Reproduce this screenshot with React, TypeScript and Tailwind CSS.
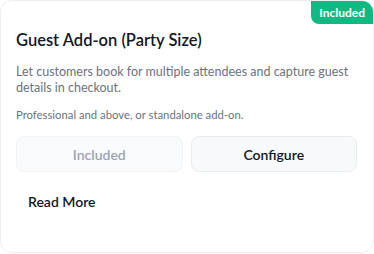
import React from "react";

export default function App() {
  return (
    <div className="w-[374px] h-[254px] bg-white" style={{ fontFamily: 'Lato, sans-serif' }}>
      <div className="relative w-[374px] h-[253px] rounded-xl border border-[#eceef1] bg-white overflow-hidden pl-[15px] pr-4 pt-[27px] flex flex-col">
        <div className="absolute top-0 right-0 bg-[#10b981] text-white text-[12px] font-bold leading-[23px] px-2 rounded-bl-lg">
          Included
        </div>
        <h3 className="text-[16.5px] font-semibold text-[#111827] leading-6">Guest Add-on (Party Size)</h3>
        <p className="mt-[12px] text-[12.5px] leading-[16px] text-[#6b7280]">
          Let customers book for multiple attendees and capture guest details in checkout.
        </p>
        <p className="mt-[11px] text-[11.3px] leading-[16px] text-[#6b7280]">
          Professional and above, or standalone add-on.
        </p>
        <div className="mt-[13px] grid grid-cols-2 gap-2">
          <button className="h-[36px] rounded-lg border border-[#f1f3f5] bg-[#f9fafb] text-[14px] font-semibold text-[#9ca3af]">
            Included
          </button>
          <button className="h-[36px] rounded-lg border border-[#e8ebef] bg-[#f8f9fb] text-[14px] font-semibold text-[#111827]">
            Configure
          </button>
        </div>
        <div className="mt-[12px]">
          <button className="px-3 h-[34px] text-[14px] font-semibold text-[#111827]">Read More</button>
        </div>
      </div>
    </div>
  );
}
